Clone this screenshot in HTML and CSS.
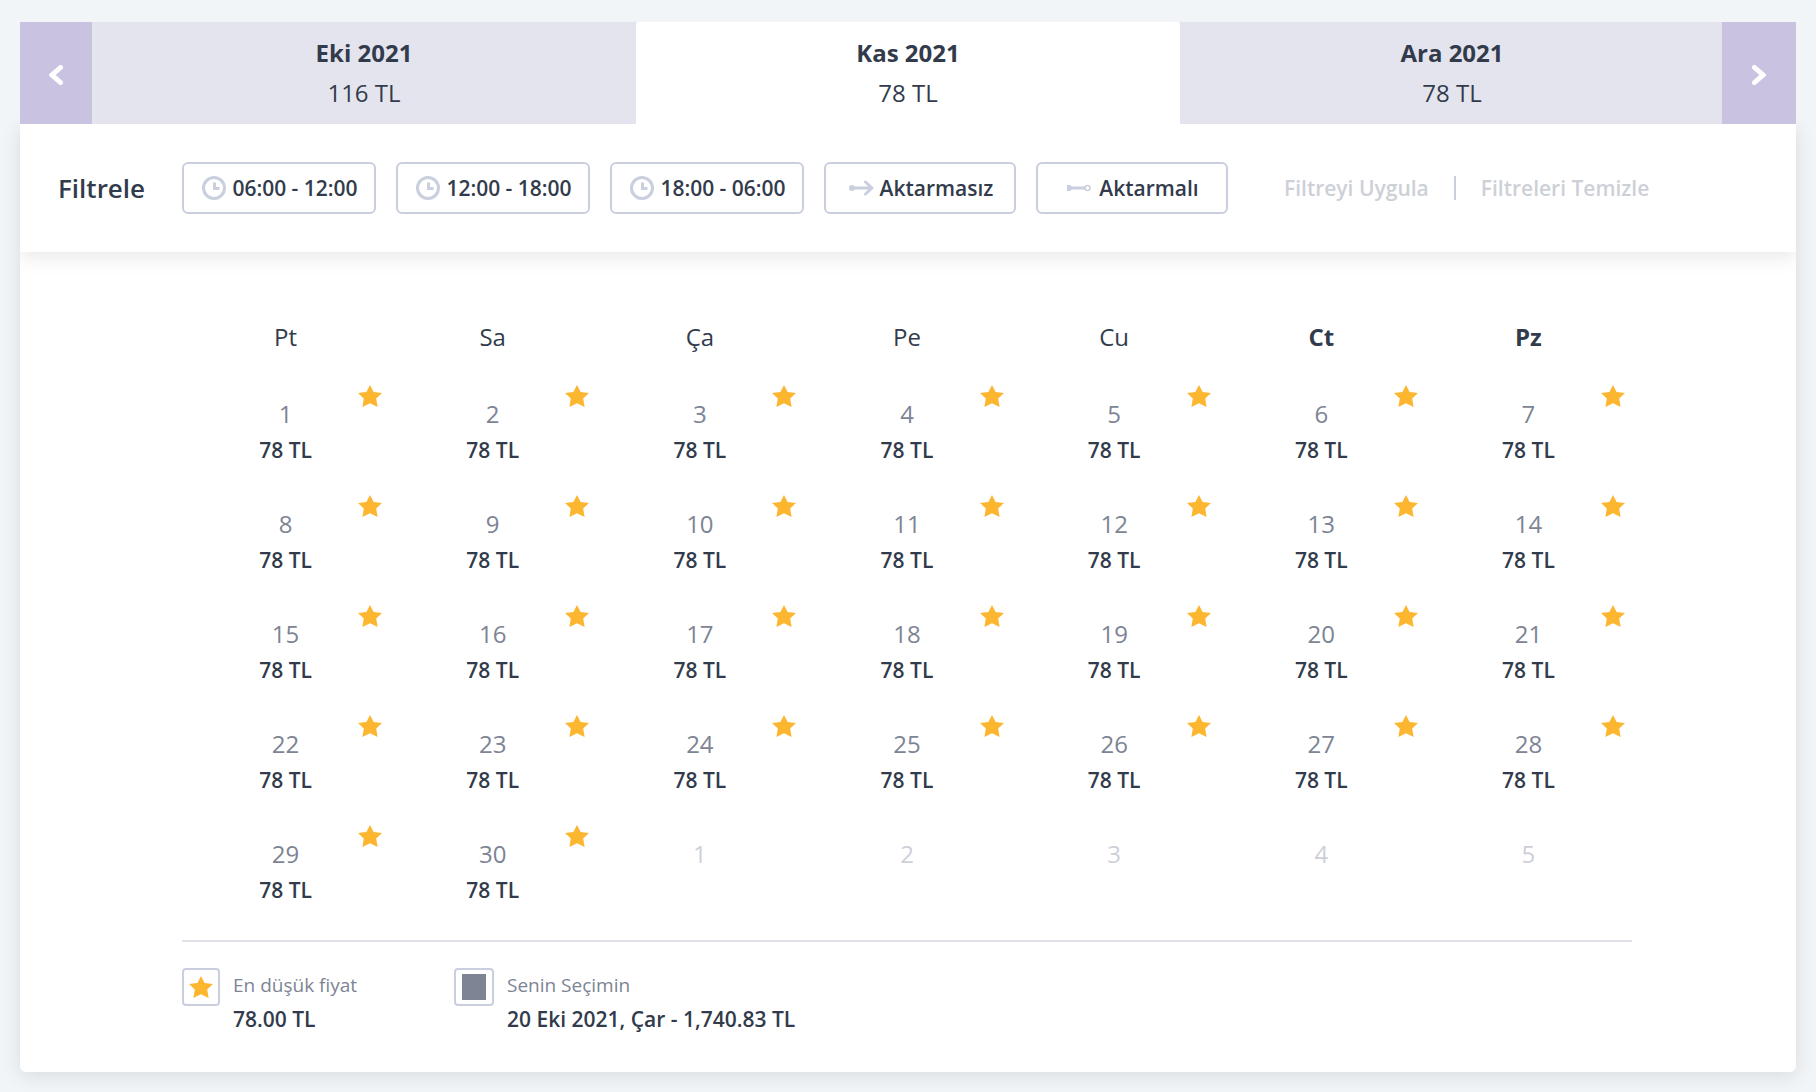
FILE: index.html
```html
<!DOCTYPE html>
<html lang="tr">
<head>
<meta charset="utf-8">
<meta name="viewport" content="width=device-width, initial-scale=1">
<title>Fiyat Takvimi</title>
<link rel="stylesheet" href="styles.css">
</head>
<body>
<svg class="sprite" aria-hidden="true">
  <symbol id="star" viewBox="0 0 24 22"><path d="M12 0 L15.6 7 L24 8 L18.2 13.6 L19.6 22 L12 18.2 L4.4 22 L5.8 13.6 L0 8 L8.4 7 Z"/></symbol>
  <symbol id="clock" viewBox="0 0 24 24"><circle cx="12" cy="12" r="10.5" fill="none" stroke="currentColor" stroke-width="3"/><path d="M12.500 6.500V12.500H17.500" fill="none" stroke="currentColor" stroke-width="3"/></symbol>
</svg>
<main class="planner">
  <nav class="months" aria-label="Aylar">
    <button class="step step-prev" type="button" aria-label="Önceki ay"><svg width="14" height="20" viewBox="0 0 14 20"><path d="M11.500 2.500L3 10l8.500 7.500"/></svg></button>
    <button class="month" type="button"><strong>Eki 2021</strong><span>116 TL</span></button>
    <button class="month month-current" type="button"><strong>Kas 2021</strong><span>78 TL</span></button>
    <button class="month" type="button"><strong>Ara 2021</strong><span>78 TL</span></button>
    <button class="step step-next" type="button" aria-label="Sonraki ay"><svg width="14" height="20" viewBox="0 0 14 20"><path d="M2.500 2.500L11 10l-8.500 7.500"/></svg></button>
  </nav>
  <div class="card">
    <section class="filters">
      <h2 class="filters-title">Filtrele</h2>
      <div class="chips">
        <button class="chip chip-time" type="button"><svg width="24" height="24"><use href="#clock"/></svg>06:00 - 12:00</button>
        <button class="chip chip-time" type="button"><svg width="24" height="24"><use href="#clock"/></svg>12:00 - 18:00</button>
        <button class="chip chip-time" type="button"><svg width="24" height="24"><use href="#clock"/></svg>18:00 - 06:00</button>
        <button class="chip" type="button"><svg width="25" height="16" viewBox="0 0 25 16"><circle cx="3" cy="8" r="3" fill="currentColor"/><path d="M3 8H22M16.500 2L23 8l-6.500 6" fill="none" stroke="currentColor" stroke-width="3" stroke-linecap="round" stroke-linejoin="round"/></svg>Aktarmasız</button>
        <button class="chip chip-stop" type="button"><svg width="24" height="8" viewBox="0 0 24 8"><path d="M0 1H3L5 2.500H18V5.500H5L3 7H0Z" fill="currentColor"/><circle cx="20.500" cy="4" r="2.500" fill="none" stroke="currentColor" stroke-width="1.500"/></svg>Aktarmalı</button>
      </div>
      <div class="actions">
        <button class="action" type="button" disabled>Filtreyi Uygula</button>
        <button class="action" type="button" disabled>Filtreleri Temizle</button>
      </div>
    </section>
    <section class="content">
      <table class="calendar">
        <thead>
          <tr><th>Pt</th><th>Sa</th><th>Ça</th><th>Pe</th><th>Cu</th><th class="weekend">Ct</th><th class="weekend">Pz</th></tr>
        </thead>
        <tbody>
          <tr>
            <td><svg class="star"><use href="#star"/></svg><span class="day">1</span><span class="fare">78 TL</span></td>
            <td><svg class="star"><use href="#star"/></svg><span class="day">2</span><span class="fare">78 TL</span></td>
            <td><svg class="star"><use href="#star"/></svg><span class="day">3</span><span class="fare">78 TL</span></td>
            <td><svg class="star"><use href="#star"/></svg><span class="day">4</span><span class="fare">78 TL</span></td>
            <td><svg class="star"><use href="#star"/></svg><span class="day">5</span><span class="fare">78 TL</span></td>
            <td><svg class="star"><use href="#star"/></svg><span class="day">6</span><span class="fare">78 TL</span></td>
            <td><svg class="star"><use href="#star"/></svg><span class="day">7</span><span class="fare">78 TL</span></td>
          </tr>
          <tr>
            <td><svg class="star"><use href="#star"/></svg><span class="day">8</span><span class="fare">78 TL</span></td>
            <td><svg class="star"><use href="#star"/></svg><span class="day">9</span><span class="fare">78 TL</span></td>
            <td><svg class="star"><use href="#star"/></svg><span class="day">10</span><span class="fare">78 TL</span></td>
            <td><svg class="star"><use href="#star"/></svg><span class="day">11</span><span class="fare">78 TL</span></td>
            <td><svg class="star"><use href="#star"/></svg><span class="day">12</span><span class="fare">78 TL</span></td>
            <td><svg class="star"><use href="#star"/></svg><span class="day">13</span><span class="fare">78 TL</span></td>
            <td><svg class="star"><use href="#star"/></svg><span class="day">14</span><span class="fare">78 TL</span></td>
          </tr>
          <tr>
            <td><svg class="star"><use href="#star"/></svg><span class="day">15</span><span class="fare">78 TL</span></td>
            <td><svg class="star"><use href="#star"/></svg><span class="day">16</span><span class="fare">78 TL</span></td>
            <td><svg class="star"><use href="#star"/></svg><span class="day">17</span><span class="fare">78 TL</span></td>
            <td><svg class="star"><use href="#star"/></svg><span class="day">18</span><span class="fare">78 TL</span></td>
            <td><svg class="star"><use href="#star"/></svg><span class="day">19</span><span class="fare">78 TL</span></td>
            <td><svg class="star"><use href="#star"/></svg><span class="day">20</span><span class="fare">78 TL</span></td>
            <td><svg class="star"><use href="#star"/></svg><span class="day">21</span><span class="fare">78 TL</span></td>
          </tr>
          <tr>
            <td><svg class="star"><use href="#star"/></svg><span class="day">22</span><span class="fare">78 TL</span></td>
            <td><svg class="star"><use href="#star"/></svg><span class="day">23</span><span class="fare">78 TL</span></td>
            <td><svg class="star"><use href="#star"/></svg><span class="day">24</span><span class="fare">78 TL</span></td>
            <td><svg class="star"><use href="#star"/></svg><span class="day">25</span><span class="fare">78 TL</span></td>
            <td><svg class="star"><use href="#star"/></svg><span class="day">26</span><span class="fare">78 TL</span></td>
            <td><svg class="star"><use href="#star"/></svg><span class="day">27</span><span class="fare">78 TL</span></td>
            <td><svg class="star"><use href="#star"/></svg><span class="day">28</span><span class="fare">78 TL</span></td>
          </tr>
          <tr>
            <td><svg class="star"><use href="#star"/></svg><span class="day">29</span><span class="fare">78 TL</span></td>
            <td><svg class="star"><use href="#star"/></svg><span class="day">30</span><span class="fare">78 TL</span></td>
            <td class="outside"><span class="day">1</span></td>
            <td class="outside"><span class="day">2</span></td>
            <td class="outside"><span class="day">3</span></td>
            <td class="outside"><span class="day">4</span></td>
            <td class="outside"><span class="day">5</span></td>
          </tr>
        </tbody>
      </table>
      <footer class="legend">
        <div class="legend-item">
          <span class="legend-mark"><svg class="legend-star"><use href="#star"/></svg></span>
          <p class="legend-text"><span>En düşük fiyat</span><strong>78.00 TL</strong></p>
        </div>
        <div class="legend-item">
          <span class="legend-mark legend-mark-wide"><span class="swatch"></span></span>
          <p class="legend-text"><span>Senin Seçimin</span><strong>20 Eki 2021, Çar - 1,740.83 TL</strong></p>
        </div>
      </footer>
    </section>
  </div>
</main>
</body>
</html>
```
FILE: styles.css
```css
* {
  box-sizing: border-box;
}

body {
  margin: 0;
  padding: 22px 20px 20px;
  background: #f1f5f8;
  color: #323b4b;
  font-family: "Open Sans", "Noto Sans", sans-serif;
  font-size: 24px;
}

button {
  margin: 0;
  padding: 0;
  border: 0;
  background: none;
  color: inherit;
  font: inherit;
}

.sprite {
  display: none;
}

/* Month tabs */
.months {
  display: grid;
  grid-template-columns: 72px 1fr 1fr 1fr 72px;
}

.step {
  display: flex;
  align-items: center;
  justify-content: center;
  padding-top: 4px;
  background: #c9c3e1;
}

.step-next {
  margin-left: -2px;
}

.step svg {
  display: block;
  fill: none;
  stroke: #fff;
  stroke-width: 5;
  stroke-linecap: round;
}

.month {
  display: flex;
  flex-direction: column;
  align-items: center;
  padding: 11px 0;
  background: #e4e4ee;
  line-height: 40px;
}

.month strong {
  font-weight: 700;
}

.month-current {
  border-radius: 4px 4px 0 0;
  background: #fff;
}

.card {
  border-radius: 0 0 6px 6px;
  background: #fff;
  box-shadow: 0 4px 20px rgba(0, 0, 0, 0.1);
}

/* Filter bar: its shadow falls only on the calendar below */
.filters {
  display: flex;
  align-items: center;
  padding: 38px;
  box-shadow: 0 4px 20px rgba(0, 0, 0, 0.1);
  clip-path: inset(0 0 -24px 0);
}

.filters-title {
  flex: none;
  width: 124px;
  margin: 0;
  font-size: 26px;
  font-weight: 600;
  line-height: 36px;
}

.chips {
  display: flex;
  gap: 20px;
}

.chip {
  display: flex;
  align-items: center;
  justify-content: center;
  gap: 6px;
  width: 192px;
  height: 52px;
  padding-left: 2px;
  border: 2px solid #c9cfde;
  border-radius: 6px;
  font-size: 21px;
  font-weight: 600;
  white-space: nowrap;
}

.chip-time {
  width: 194px;
}

.chip-stop {
  gap: 8px;
}

.chip svg {
  flex: none;
  color: #c9cfde;
}

.actions {
  display: flex;
  align-items: center;
  margin-left: 56px;
}

.action {
  color: #cdd0d7;
  font-size: 21px;
  font-weight: 600;
  line-height: 24px;
  white-space: nowrap;
}

.action + .action {
  margin-left: 25px;
  padding-left: 25px;
  border-left: 2px solid #c9cfde;
}

/* Calendar */
.content {
  padding: 60px 164px 36px 162px;
}

.calendar {
  width: 100%;
  table-layout: fixed;
  border-collapse: collapse;
}

.calendar th {
  height: 60px;
  padding: 5px 0 15px;
  font-weight: 400;
  line-height: 40px;
}

.calendar .weekend {
  font-weight: 700;
}

.calendar td {
  position: relative;
  height: 110px;
  padding: 24px 0 0;
  text-align: center;
  vertical-align: top;
}

.day,
.fare {
  display: block;
  line-height: 36px;
}

.day {
  color: #7d8494;
}

.fare {
  font-size: 21px;
  font-weight: 600;
}

.outside .day {
  color: #cdd0d7;
}

.star {
  position: absolute;
  top: 13px;
  right: 7px;
  width: 24px;
  height: 22px;
  fill: #fdb62f;
}

/* Legend */
.legend {
  display: flex;
  margin-top: 18px;
  padding-top: 26px;
  border-top: 2px solid #dfe2ea;
}

.legend-item {
  display: flex;
  gap: 13px;
  min-width: 272px;
}

.legend-mark {
  display: flex;
  align-items: center;
  justify-content: center;
  width: 38px;
  height: 38px;
  border: 2px solid #c9cfde;
  border-radius: 4px;
}

.legend-mark-wide {
  width: 40px;
}

.legend-star {
  width: 24px;
  height: 24px;
  fill: #fdb62f;
}

.swatch {
  width: 24px;
  height: 26px;
  background: #7d8494;
}

.legend-text {
  display: flex;
  flex-direction: column;
  margin: 0;
  color: #7d8494;
  font-size: 19px;
  line-height: 34px;
}

.legend-text strong {
  color: #323b4b;
  font-size: 21px;
  font-weight: 600;
}
```
